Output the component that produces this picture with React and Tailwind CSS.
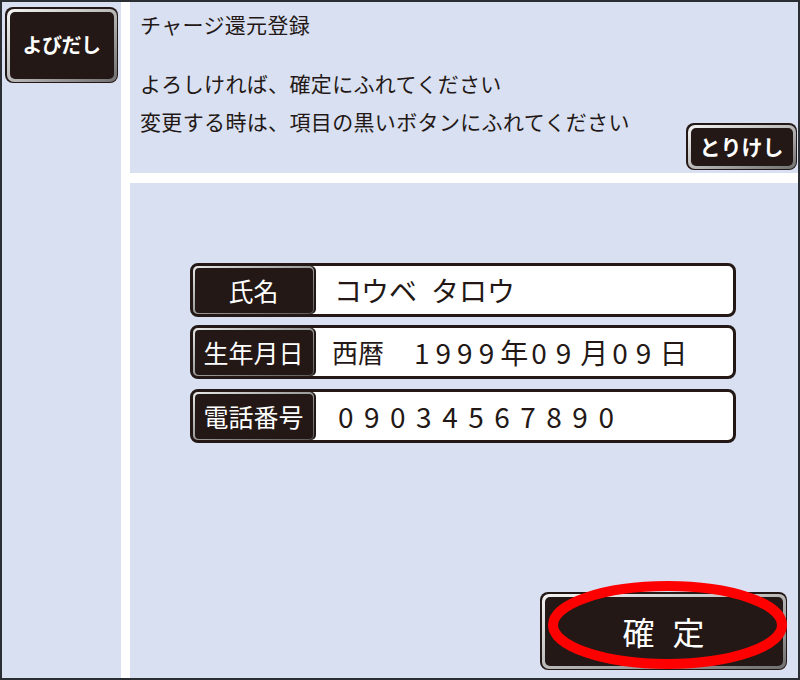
import React from "react";

const font = { fontFamily: '"Noto Sans CJK JP", "Noto Sans", sans-serif' };

function DarkButton({ className = "", innerClass = "", children }) {
  return (
    <div className={"rounded-[8px] bg-[#231815] p-[1.5px] " + className}>
      <div className="h-full w-full rounded-[7px] bg-gradient-to-br from-[#f4f4f4] via-[#b9b9b9] to-[#6f6f6f] p-[3px]">
        <div className={"flex h-full w-full items-center justify-center rounded-[5px] bg-[#231815] text-white " + innerClass}>
          {children}
        </div>
      </div>
    </div>
  );
}

function Row({ label, children, className = "" }) {
  return (
    <div className={"flex h-[54px] w-[546px] rounded-[8px] border-[3px] border-[#231815] bg-white " + className}>
      <div className="h-full w-[123px] shrink-0 rounded-[5px] border-r-[2px] border-[#231815] bg-[#231815]">
        <div className="h-full w-full rounded-[5px] bg-gradient-to-br from-[#e8e8e8] via-[#9a9a9a] to-[#5a5a5a] p-[1.5px]">
          <div className="flex h-full w-full items-center justify-center rounded-[4px] bg-[#231815] text-[25px] leading-none text-white">
            {label}
          </div>
        </div>
      </div>
      <div className="flex flex-1 items-center pl-[16px] text-[28px] leading-none text-[#231815]">
        {children}
      </div>
    </div>
  );
}

export default function App() {
  return (
    <div style={font} className="h-[680px] w-[800px] bg-[#2b2e33] p-[2px]">
      <div className="flex h-full w-full gap-[9px] bg-white">
        {/* left column */}
        <div className="w-[119px] shrink-0 bg-[#d9e0f1] pl-[3px] pr-[3px] pt-[5px]">
          <DarkButton className="h-[76px] w-[113px]" innerClass="text-[20px] font-bold tracking-[-0.5px]">
            よびだし
          </DarkButton>
        </div>
        {/* right column */}
        <div className="flex flex-1 flex-col gap-[10px]">
          <div className="flex h-[171px] shrink-0 justify-between bg-[#d9e0f1] pl-[10px] pr-[1px] pb-[3px]">
            <div className="pt-[7px] text-[21px] tracking-[0.35px] text-[#231815]">
              <div className="leading-[30px]">チャージ還元登録</div>
              <div className="mt-[25px] leading-[38px]">よろしければ、確定にふれてください</div>
              <div className="leading-[38px]">変更する時は、項目の黒いボタンにふれてください</div>
            </div>
            <DarkButton className="h-[47px] w-[111px] self-end" innerClass="text-[21px] font-bold">
              とりけし
            </DarkButton>
          </div>
          <div className="flex flex-1 flex-col bg-[#d9e0f1] pl-[60px]">
            <Row label="氏名" className="mt-[80px]">
              <span className="ml-[2px]">コウベ</span>
              <span className="ml-[14px]">タロウ</span>
            </Row>
            <Row label="生年月日" className="mt-[8px]">
              <span className="text-[26px]">西暦</span>
              <span className="ml-[30px] tracking-[6px]">1999</span>
              <span className="text-[28px]">年</span>
              <span className="ml-[3px] tracking-[9px]">09</span>
              <span className="text-[28px]">月</span>
              <span className="ml-[4px] tracking-[8px]">09</span>
              <span className="text-[28px]">日</span>
            </Row>
            <Row label="電話番号" className="mt-[10px]">
              <span className="ml-[6px] tracking-[10.5px]">09034567890</span>
            </Row>
            <div className="mt-auto flex justify-end pb-[8px] pr-[11px]">
              <div className="relative">
                <DarkButton className="h-[78px] w-[247px]" innerClass="text-[32px] tracking-[18px] pl-[18px]">
                  確定
                </DarkButton>
                <svg
                  className="pointer-events-none absolute left-0 top-0 overflow-visible"
                  width="247"
                  height="78"
                  viewBox="0 0 247 78"
                >
                  <ellipse cx="127.5" cy="33" rx="114.5" ry="39" fill="none" stroke="#ff0000" strokeWidth="10" />
                </svg>
              </div>
            </div>
          </div>
        </div>
      </div>
    </div>
  );
}
